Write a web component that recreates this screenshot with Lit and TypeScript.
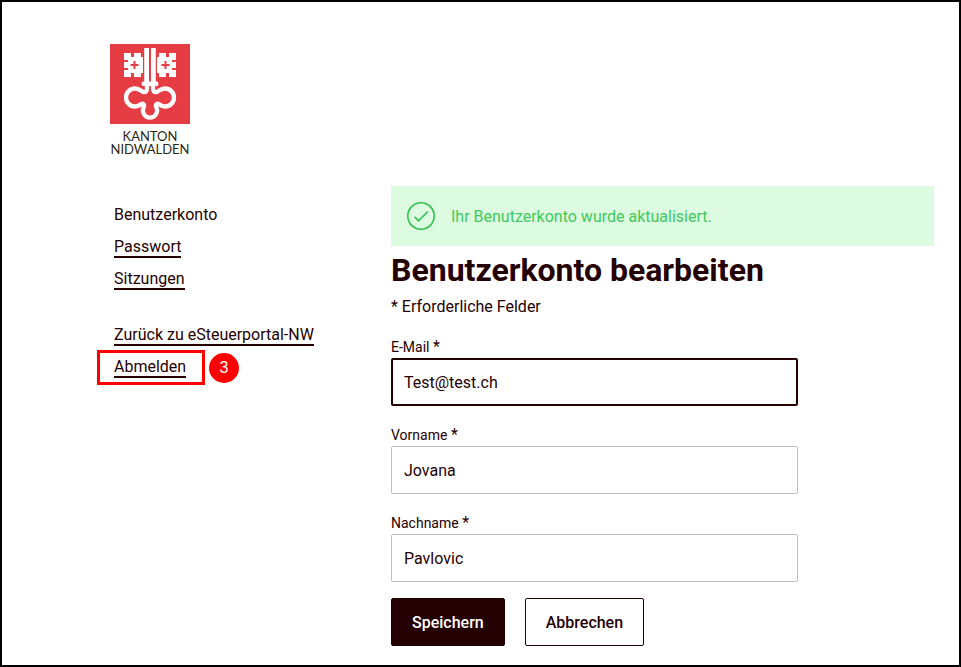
import { LitElement, html, css } from "lit";
import { customElement, state } from "lit/decorators.js";

interface Field {
  id: string;
  label: string;
  type: string;
  value: string;
  active?: boolean;
}

@customElement("nw-logo")
class NwLogo extends LitElement {
  static styles = css`
    :host { display: flex; flex-direction: column; align-items: center; width: 84px; }
    .arms { display: block; width: 80px; height: 80px; }
    .name {
      margin-top: 6px;
      font: 13px/13px Lato, sans-serif;
      color: #2b2810;
      text-align: center;
    }
  `;
  render() {
    return html`
      <svg class="arms" viewBox="0 0 80 80" aria-hidden="true">
        <rect width="80" height="80" fill="#e63c43" />
        <g fill="#fff" fill-rule="evenodd">
          <path d="M14 9h7v4h3v-4h7v4h2v16h-2v4h-7v-4h-3v4h-7v-7h4v-2h-4v-6h4v-2h-4zM23.500 17v3h-3v2h3v3h2v-3h3v-2h-3v-3z" />
          <path d="M66 9h-7v4h-3v-4h-7v4h-2v16h2v4h7v-4h3v4h7v-7h-4v-2h4v-6h-4v-2h4zM56.500 17v3h3v2h-3v3h-2v-3h-3v-2h3v-3z" />
          <rect x="34.200" y="4" width="4.800" height="34" />
          <rect x="41" y="4" width="4.800" height="34" />
          <rect x="31.700" y="37.600" width="16.600" height="4.400" rx="1.500" />
        </g>
        <path fill="none" stroke="#fff" stroke-width="4.300" stroke-linejoin="round"
          d="M37 41v3.500q0 4-3.500 3.500C31 47 29.500 44.500 25 44.500a9 9 0 0 0 0 18q3.500 0 6-2.300c2.500-1.200 4 1 2.500 3.500a7.100 7.100 0 1 0 13 0c-1.500-2.500 0-4.700 2.500-3.500q2.500 2.300 6 2.300a9 9 0 0 0 0-18c-4.500 0-6 2.500-8.500 3.500q-3.500 .5-3.500-3.500V41" />
      </svg>
      <div class="name">KANTON<br />NIDWALDEN</div>
    `;
  }
}

@customElement("app-root")
class AppRoot extends LitElement {
  @state() private fields: Field[] = [
    { id: "email", label: "E-Mail", type: "email", value: "Test@test.ch", active: true },
    { id: "firstName", label: "Vorname", type: "text", value: "Jovana" },
    { id: "lastName", label: "Nachname", type: "text", value: "Pavlovic" },
  ];

  static styles = css`
    :host {
      display: block;
      box-sizing: border-box;
      min-height: 100vh;
      border: 2px solid #000;
      padding: 42px 25px 19px 106px;
      background: #fff;
      color: #250002;
      font: 16px/26px Roboto, sans-serif;
    }
    *, *::before { box-sizing: border-box; }
    .layout { display: flex; margin-top: 30px; }
    .side { flex: 0 0 283px; padding: 16px 0 0 6px; }
    .list { list-style: none; margin: 0 0 24px; padding: 0; }
    .item { display: flex; height: 32px; }
    .link {
      height: 24px;
      color: inherit;
      text-decoration: none;
      border-bottom: 2px solid #250002;
    }
    .marked { position: relative; }
    .marked::before {
      content: "";
      position: absolute;
      left: -17px;
      top: -4px;
      width: 108px;
      height: 35px;
      border: 3px solid #f00;
      pointer-events: none;
    }
    .badge {
      position: absolute;
      left: 95px;
      top: -1px;
      width: 30px;
      height: 30px;
      border-radius: 50%;
      background: #f00;
      color: #fff;
      font: 16px/30px "Liberation Sans", sans-serif;
      text-align: center;
    }
    .main { flex: 1; min-width: 0; }
    .alert {
      display: flex;
      align-items: center;
      gap: 16px;
      height: 60px;
      padding: 0 16px;
      background: #dcfbe1;
      color: #42c95b;
    }
    .message { padding-top: 2px; }
    .check { width: 28px; height: 28px; }
    .title { margin: 4px 0 0; font-size: 32px; line-height: 40px; font-weight: 700; }
    .hint { margin: 4px 0 14px; }
    .form { width: 75%; }
    .field { margin-bottom: 16px; }
    .label { display: block; height: 24px; font-size: 14px; }
    .star { font-size: 16px; }
    .input {
      display: block;
      width: 100%;
      height: 48px;
      border: 1px solid #bfbfbf;
      border-radius: 2px;
      padding: 0 12px;
      background: #fff;
      color: inherit;
      font: inherit;
      outline: none;
    }
    .active, .input:focus { border: 2px solid #250002; padding: 0 11px; }
    .actions { display: flex; gap: 20px; }
    .button {
      height: 48px;
      padding: 2px 20px 0;
      border: 1px solid #250002;
      border-radius: 2px;
      background: #fff;
      color: #250002;
      font: 500 16px/24px Roboto, sans-serif;
    }
    .primary { background: #250002; color: #fff; }
  `;

  render() {
    return html`
      <nw-logo></nw-logo>
      <div class="layout">
        <nav class="side">
          <ul class="list">
            <li class="item">Benutzerkonto</li>
            <li class="item"><a class="link" href="#passwort">Passwort</a></li>
            <li class="item"><a class="link" href="#sitzungen">Sitzungen</a></li>
          </ul>
          <ul class="list">
            <li class="item"><a class="link" href="#portal">Zurück zu eSteuerportal-NW</a></li>
            <li class="item marked">
              <a class="link" href="#abmelden">Abmelden</a>
              <span class="badge">3</span>
            </li>
          </ul>
        </nav>
        <main class="main">
          <div class="alert" role="status">
            <svg class="check" viewBox="0 0 28 28" fill="none" stroke="#2fc24b" aria-hidden="true">
              <circle cx="14" cy="14" r="13.200" stroke-width="1.600" />
              <path d="M7.500 14.800l4 4L20.800 9.500" stroke-width="1.600" />
            </svg>
            <span class="message">Ihr Benutzerkonto wurde aktualisiert.</span>
          </div>
          <h1 class="title">Benutzerkonto bearbeiten</h1>
          <p class="hint">* Erforderliche Felder</p>
          <form class="form">
            ${this.fields.map(
              (f) => html`
                <div class="field">
                  <label class="label" for=${f.id}>${f.label} <span class="star">*</span></label>
                  <input class="input ${f.active ? "active" : ""}" id=${f.id} type=${f.type} .value=${f.value} required />
                </div>
              `
            )}
            <div class="actions">
              <button class="button primary" type="submit">Speichern</button>
              <button class="button" type="button">Abbrechen</button>
            </div>
          </form>
        </main>
      </div>
    `;
  }
}
